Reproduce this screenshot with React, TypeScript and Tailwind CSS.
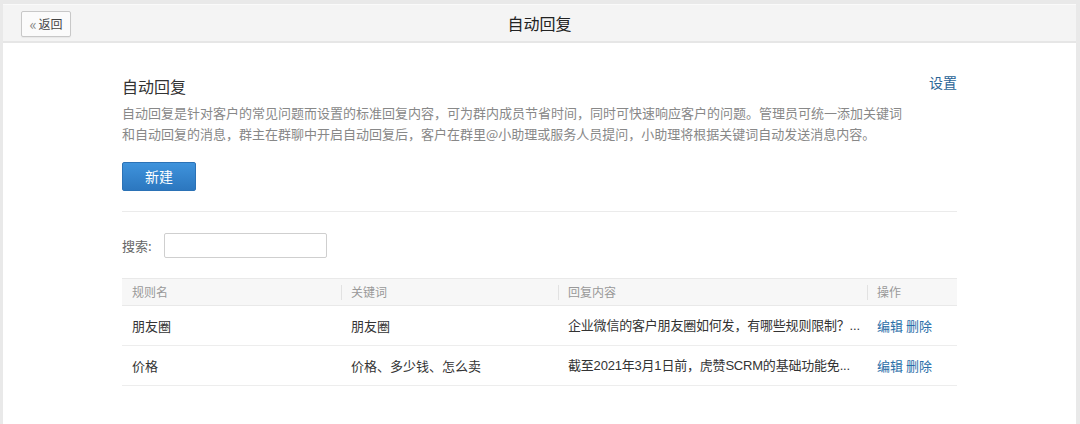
import React from "react";

const font = { fontFamily: '"Noto Sans CJK SC", "Noto Sans", "Liberation Sans", sans-serif' };
const cellFont = { fontFamily: '"Liberation Sans", "Noto Sans CJK SC", sans-serif' };

const rows = [
  { name: "朋友圈", kw: "朋友圈", reply: "企业微信的客户朋友圈如何发，有哪些规则限制？..." },
  { name: "价格", kw: "价格、多少钱、怎么卖", reply: "截至2021年3月1日前，虎赞SCRM的基础功能免..." },
];

export default function App() {
  return (
    <div className="w-full h-[424px] bg-[#e9e9e9] pl-[3px] pt-[4px] pr-[4px] overflow-hidden" style={font}>
      <div className="h-full bg-white flex flex-col">
        <div className="h-[39px] bg-[#f4f4f4] border-t border-t-[#fafafa] border-b-2 border-b-[#e6e6e6] relative flex items-center justify-center shrink-0">
          <button className="absolute left-[18px] top-[6px] h-[26px] w-[50px] bg-[#fbfbfb] border border-[#c8c8c8] rounded-[2px] text-[12px] text-[#444] flex items-center justify-center gap-[2px] shadow-[0_1px_1px_rgba(0,0,0,0.05)]">
            <span className="text-[#888] text-[15px] leading-none mb-[2px]">«</span>
            <span>返回</span>
          </button>
          <span className="text-[16px] text-[#222]">自动回复</span>
        </div>
        <div className="pl-[119px] pr-[119px] pt-[29px]">
          <div className="flex justify-between items-start">
            <div className="text-[16px] text-[#333] leading-[24px] mt-[2px]">自动回复</div>
            <a className="text-[14px] text-[#2a6496] leading-[20px]">设置</a>
          </div>
          <p className="text-[13px] text-[#888] leading-[21px] max-w-[786px] mt-[4px]">
            自动回复是针对客户的常见问题而设置的标准回复内容，可为群内成员节省时间，同时可快速响应客户的问题。管理员可统一添加关键词和自动回复的消息，群主在群聊中开启自动回复后，客户在群里@小助理或服务人员提问，小助理将根据关键词自动发送消息内容。
          </p>
          <button className="mt-[18px] w-[74px] h-[29px] rounded-[2px] bg-gradient-to-b from-[#3f93dc] to-[#2c77bf] text-white text-[14px] border border-[#2b72b6]">
            新建
          </button>
          <div className="mt-[20px] border-t border-[#ebebeb]" />
          <div className="mt-[21px] flex items-center">
            <span className="text-[13px] text-[#666]">搜索:</span>
            <input className="ml-[12px] w-[163px] h-[25px] border border-[#cfcfcf] rounded-[2px] outline-none" />
          </div>
          <table className="mt-[20px] w-full border-collapse table-fixed">
            <colgroup>
              <col className="w-[219px]" />
              <col className="w-[217px]" />
              <col className="w-[309px]" />
              <col />
            </colgroup>
            <thead>
              <tr className="bg-[#f7f7f7] border-t border-b border-[#e9e9e9] h-[27px]">
                {["规则名", "关键词", "回复内容", "操作"].map((h, i) => (
                  <th key={h} className="relative text-left font-normal text-[12px] text-[#999] pl-[10px] p-0">
                    {i > 0 && <span className="absolute left-0 top-[6px] h-[15px] w-px bg-[#e2e2e2]" />}
                    {h}
                  </th>
                ))}
              </tr>
            </thead>
            <tbody>
              {rows.map((r) => (
                <tr key={r.name} className="h-[40px] border-b border-[#ededed]">
                  <td className="pl-[10px] text-[13px] text-[#333]">{r.name}</td>
                  <td className="pl-[10px] text-[13px] text-[#333]">{r.kw}</td>
                  <td className="pl-[10px] pr-0 text-[13px] text-[#333] whitespace-nowrap tracking-[-0.2px]" style={cellFont}>{r.reply}</td>
                  <td className="pl-[10px] text-[13px] text-[#2a6ea8] whitespace-nowrap">
                    <a>编辑</a> <a>删除</a>
                  </td>
                </tr>
              ))}
            </tbody>
          </table>
        </div>
      </div>
    </div>
  );
}
